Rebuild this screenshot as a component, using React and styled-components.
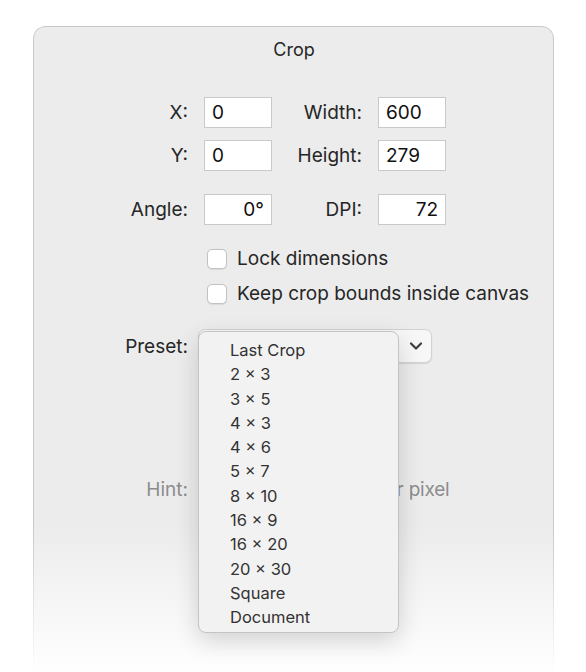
import React from 'react';
import styled, { createGlobalStyle } from 'styled-components';

const GlobalStyle = createGlobalStyle`
  html, body {
    margin: 0;
    padding: 0;
    background: #ffffff;
    overflow: hidden;
  }
  body {
    font-family: Inter, "Liberation Sans", Arial, sans-serif;
    -webkit-font-smoothing: antialiased;
  }
`;

const Page = styled.div`
  width: 586px;
  height: 672px;
  padding: 26px 0 0 33px;
  box-sizing: border-box;
  overflow: hidden;
`;

const Window = styled.div`
  position: relative;
  width: 521px;
  height: 700px;
  display: flex;
  flex-direction: column;

  &::before {
    content: '';
    position: absolute;
    inset: 0;
    box-sizing: border-box;
    background: #ececec;
    border: 1px solid #c8c8c8;
    border-radius: 12px;
    box-shadow: 0 3px 22px rgba(0, 0, 0, 0.13);
    -webkit-mask-image: linear-gradient(to bottom, #000 0, #000 500px, transparent 650px);
    mask-image: linear-gradient(to bottom, #000 0, #000 500px, transparent 650px);
  }
`;

const Content = styled.div`
  position: relative;
  display: flex;
  flex-direction: column;
  padding-left: 1px;
`;

const Title = styled.div`
  margin-top: 12px;
  height: 24px;
  line-height: 24px;
  text-align: center;
  font-size: 18px;
  color: #262626;
`;

const FieldGrid = styled.div`
  display: grid;
  grid-template-columns: 154px 68px 74px 68px;
  grid-auto-rows: 31px;
  column-gap: 16px;
  row-gap: 12px;
  align-items: center;
  margin-top: ${(p) => p.$top}px;
`;

const Label = styled.div`
  justify-self: stretch;
  text-align: right;
  font-size: 19px;
  color: ${(p) => (p.$muted ? '#8d8d8d' : '#262626')};
  white-space: nowrap;
`;

const Note = styled.div`
  font-size: 19px;
  letter-spacing: -0.2px;
  color: #8d8d8d;
  white-space: nowrap;
`;

const Field = styled.div`
  height: 31px;
  box-sizing: border-box;
  background: #ffffff;
  border: 1px solid #c9c9c9;
  padding: 0 7px;
  display: flex;
  align-items: center;
  justify-content: ${(p) => (p.$right ? 'flex-end' : 'flex-start')};
  font-size: 19px;
  color: #111;
`;

const Row = styled.div`
  display: grid;
  grid-template-columns: 154px auto;
  column-gap: ${(p) => p.$gap}px;
  align-items: center;
  justify-items: start;
  margin-top: ${(p) => p.$top}px;
  height: ${(p) => p.$h}px;
`;

const CheckLine = styled.label`
  grid-column: 2;
  display: flex;
  align-items: center;
  gap: 10px;
  font-size: 19px;
  color: #262626;
  white-space: nowrap;
`;

const Box = styled.span`
  width: 20px;
  height: 20px;
  box-sizing: border-box;
  border: 1px solid #c3c3c3;
  border-radius: 5px;
  background: #ffffff;
  box-shadow: 0 0.5px 1px rgba(0, 0, 0, 0.08);
`;

const PopupWrap = styled.div`
  position: relative;
`;

const Popup = styled.div`
  width: 234px;
  height: 34px;
  box-sizing: border-box;
  border: 1px solid #d2d2d2;
  border-radius: 7px;
  background: #f7f7f7;
  box-shadow: 0 1px 1.5px rgba(0, 0, 0, 0.1);
  display: flex;
  align-items: center;
  justify-content: flex-end;
  padding-right: 8px;
`;

const Menu = styled.ul`
  position: absolute;
  top: 2px;
  left: 0;
  width: 201px;
  height: 302px;
  box-sizing: border-box;
  margin: 0;
  padding: 6px 0 0;
  list-style: none;
  background: #f2f2f2;
  border: 1px solid #c4c4c4;
  border-radius: 8px;
  box-shadow: 0 8px 24px rgba(0, 0, 0, 0.16);
  z-index: 2;
`;

const MenuItem = styled.li`
  height: 24.3px;
  line-height: 24.3px;
  padding-left: 31px;
  font-size: 16.5px;
  color: #333333;
  white-space: nowrap;
`;

const presets = [
  'Last Crop',
  '2 × 3',
  '3 × 5',
  '4 × 3',
  '4 × 6',
  '5 × 7',
  '8 × 10',
  '16 × 9',
  '16 × 20',
  '20 × 30',
  'Square',
  'Document',
];

const Chevron = () => (
  <svg width="14" height="10" viewBox="0 0 14 10">
    <path d="M2 2.5 L7 7.5 L12 2.5" fill="none" stroke="#3d3d3d" strokeWidth="2.2" strokeLinecap="round" strokeLinejoin="round" />
  </svg>
);

const App = () => (
  <>
    <GlobalStyle />
    <Page>
      <Window>
        <Content>
          <Title>Crop</Title>

          <FieldGrid $top={35}>
            <Label>X:</Label>
            <Field>0</Field>
            <Label>Width:</Label>
            <Field>600</Field>
            <Label>Y:</Label>
            <Field>0</Field>
            <Label>Height:</Label>
            <Field>279</Field>
          </FieldGrid>

          <FieldGrid $top={23}>
            <Label>Angle:</Label>
            <Field $right>0°</Field>
            <Label>DPI:</Label>
            <Field $right>72</Field>
          </FieldGrid>

          <Row $gap={19} $top={22} $h={20}>
            <CheckLine>
              <Box />
              Lock dimensions
            </CheckLine>
          </Row>
          <Row $gap={19} $top={15} $h={20}>
            <CheckLine>
              <Box />
              Keep crop bounds inside canvas
            </CheckLine>
          </Row>

          <Row $gap={10} $top={27} $h={34}>
            <Label>Preset:</Label>
            <PopupWrap>
              <Popup>
                <Chevron />
              </Popup>
              <Menu>
                {presets.map((p) => (
                  <MenuItem key={p}>{p}</MenuItem>
                ))}
              </Menu>
            </PopupWrap>
          </Row>

          <Row $gap={10} $top={114} $h={24}>
            <Label $muted>Hint:</Label>
            <Note>Values are in points per pixel</Note>
          </Row>
        </Content>
      </Window>
    </Page>
  </>
);

export default App;
